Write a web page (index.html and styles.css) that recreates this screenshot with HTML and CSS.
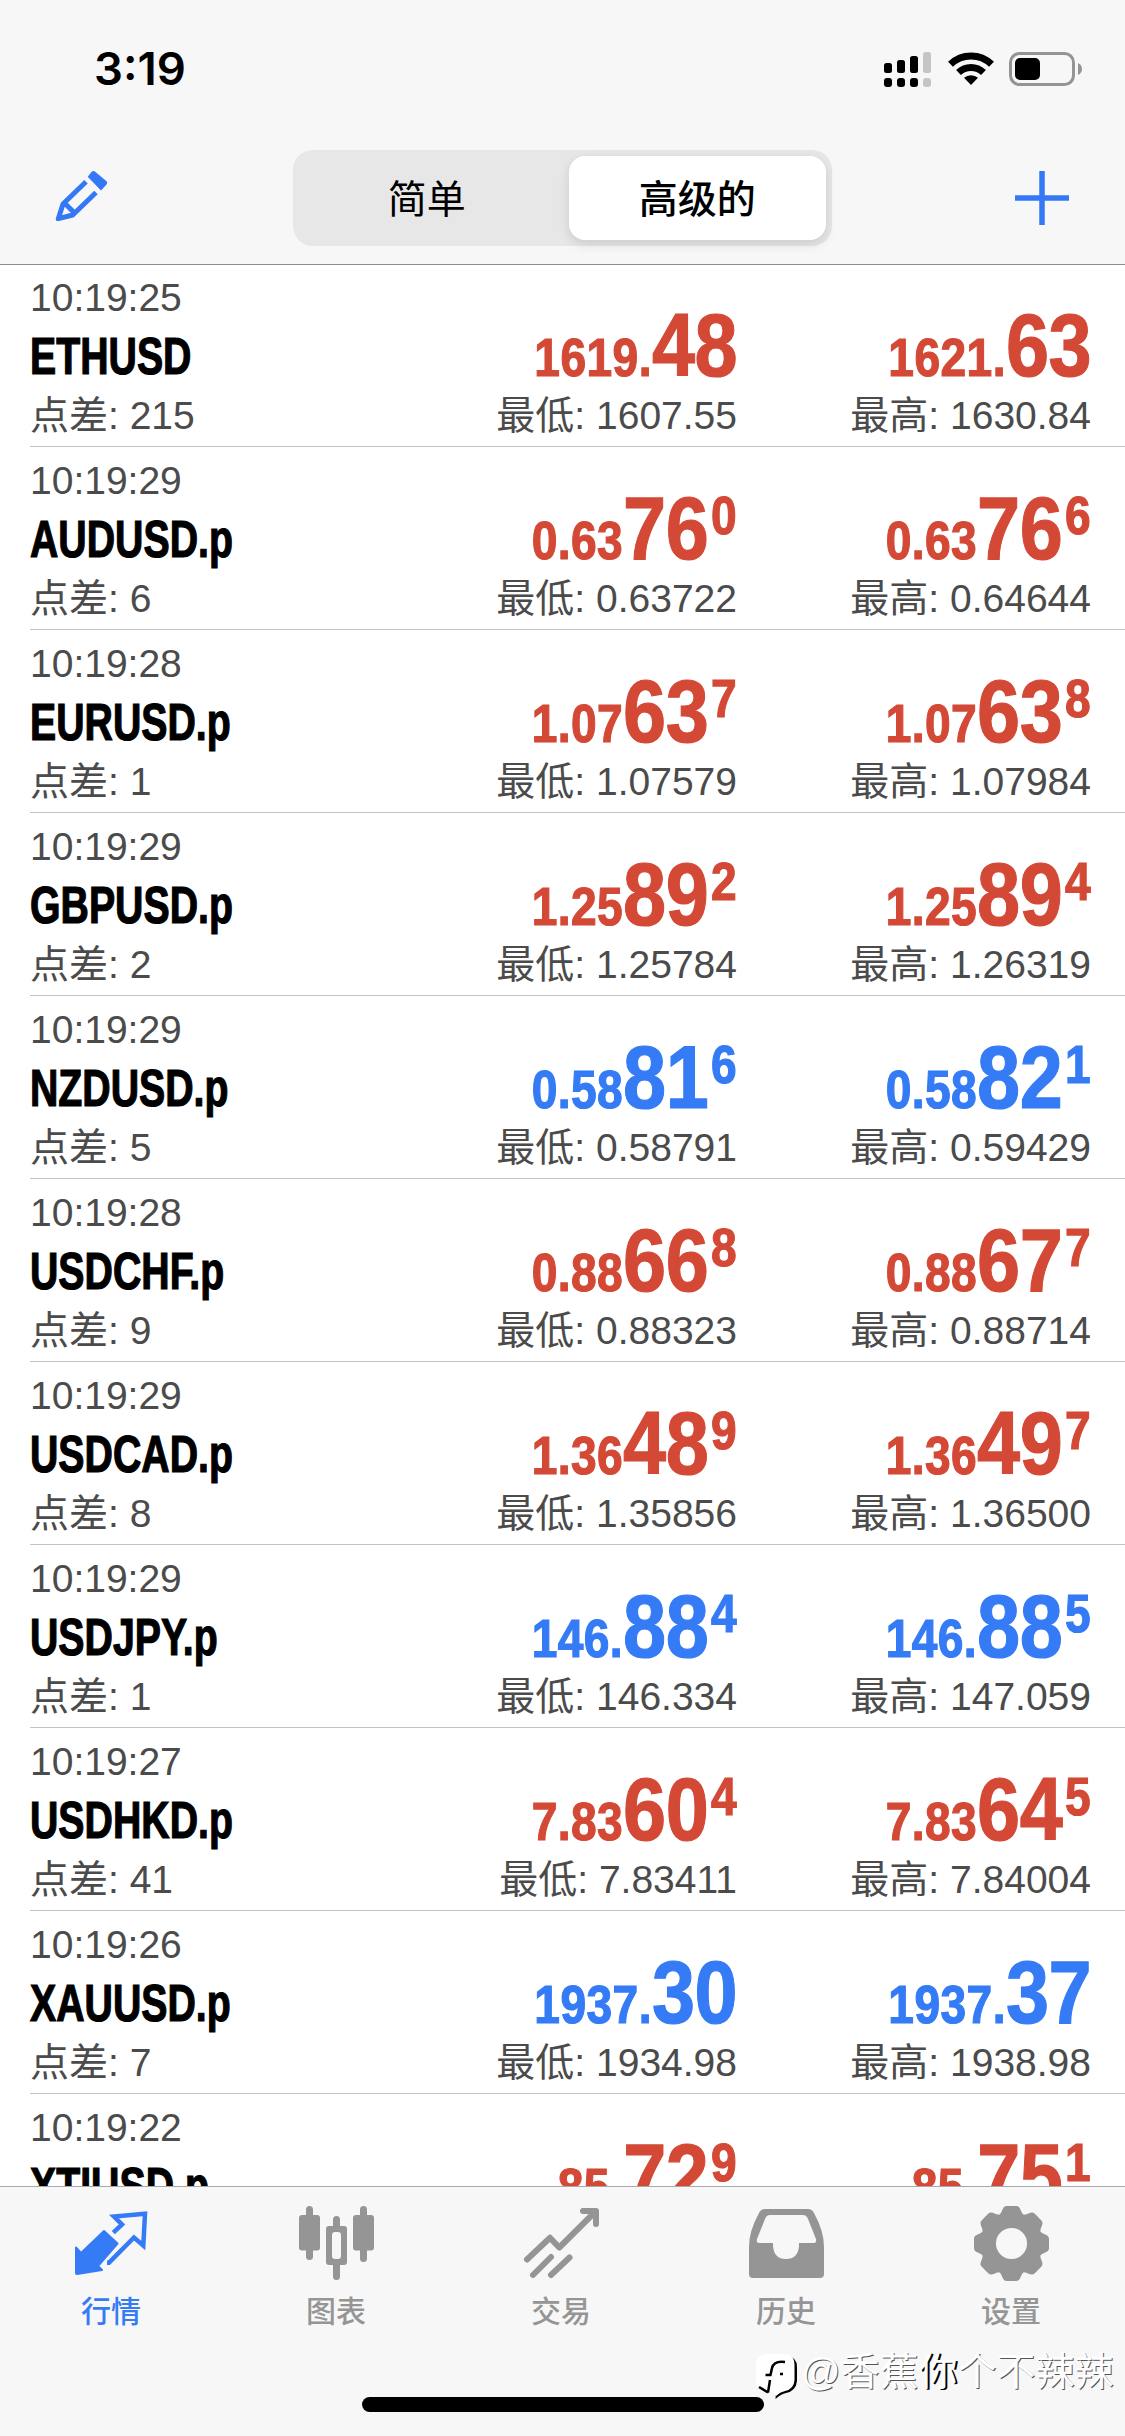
FILE: index.html
```html
<!DOCTYPE html>
<html lang="zh-CN">
<head>
<meta charset="utf-8">
<title>行情</title>
<link rel="stylesheet" href="styles.css">
</head>
<body>
<div class="app">
  <header class="header">
    <div class="status">
      <span class="clock">3:19</span>
      <div class="status-icons">
        <svg width="48" height="36" viewBox="0 0 48 36"><g><rect x="0" y="11" width="8" height="10" rx="2.5"/><rect x="13" y="8" width="8" height="13" rx="2.5"/><rect x="26" y="4" width="8" height="17" rx="2.5"/><rect x="0" y="26" width="8" height="9" rx="3"/><rect x="13" y="26" width="8" height="9" rx="3"/><rect x="26" y="26" width="8" height="9" rx="3"/></g><g fill="#c5c5c5"><rect x="39" y="0" width="8" height="21" rx="2.5"/><rect x="39" y="26" width="8" height="9" rx="3"/></g></svg>
        <svg width="46" height="34" viewBox="0 0 46 34"><g fill="none" stroke="#000" stroke-width="7"><path d="M2.5 12.2A29.5 29.5 0 0 1 43.5 12.2"/><path d="M10.5 20.6A18 18 0 0 1 35.5 20.6"/></g><path d="M16 25.8A10.5 10.5 0 0 1 30 25.8L23 33Z"/></svg>
        <svg width="74" height="34" viewBox="0 0 74 34"><rect x="1.5" y="1.5" width="63" height="31" rx="9" fill="none" stroke="#949494" stroke-width="3"/><rect x="6" y="6" width="25" height="22" rx="5"/><path d="M69 11Q73 13 73 17T69 23Z" fill="#949494"/></svg>
      </div>
    </div>
    <nav class="toolbar">
      <svg class="edit" width="54" height="54" viewBox="0 0 54 54"><path fill="#3478f6" d="M32.7 5.7L36.5 1Q38.3-1 40.5 1L51 9.7Q53 11.5 51.5 13.5L46 19.5Z"/><path fill="none" stroke="#3478f6" stroke-width="5" stroke-linejoin="round" d="M31 10.7L8 33L3.3 47.7L17.7 44L41 21.5M9 31.5L20 42.5"/></svg>
      <div class="segments"><span class="segment">简单</span><span class="segment active">高级的</span></div>
      <svg class="add" width="54" height="54" viewBox="0 0 54 54"><path stroke="#3478f6" stroke-width="5.5" d="M27 0V54M0 27H54"/></svg>
    </nav>
  </header>
  <main class="quotes" id="quotes"></main>
  <footer class="tabs">
    <div class="tab active"><svg width="80" height="84" viewBox="0 0 80 84"><path fill="currentColor" stroke="currentColor" stroke-width="2" stroke-linejoin="round" d="M5 47.5L10 53L33 31L46.500 43.500L27 66L31 70L6 74Q5 74 5 73Z"/><path fill="none" stroke="currentColor" stroke-width="4.5" d="M42.3 32.7L51 24.5L43 16.5L74 13.8L72.3 45.5L63 37.5L38 62.7H36"/></svg><span>行情</span></div>
    <div class="tab"><svg width="80" height="84" viewBox="0 0 80 84" fill="currentColor"><rect x="3" y="15" width="21" height="35.5" rx="3"/><rect x="10" y="6" width="7" height="54" rx="3.5"/><rect x="57" y="15" width="21" height="35.5" rx="3"/><rect x="64" y="6" width="7" height="56" rx="3.5"/><rect x="30" y="26" width="21" height="39" rx="3"/><rect x="37" y="16" width="7" height="64" rx="3.5"/><rect x="36" y="32" width="9" height="27" rx="3" fill="#f7f7f7"/></svg><span>图表</span></div>
    <div class="tab"><svg width="80" height="84" viewBox="0 0 80 84"><g fill="none" stroke="currentColor" stroke-width="6" stroke-linecap="round" stroke-linejoin="round"><path d="M6 59.5L29 37.8L38.3 47.5L74 12M62 11H75V24M12 75L30 57M30 75L48.5 57.5"/></g></svg><span>交易</span></div>
    <div class="tab"><svg width="80" height="84" viewBox="0 0 80 84"><path fill="currentColor" fill-rule="evenodd" d="M19 9H62Q66 9 68 13Q78 31 78 47V74Q78 78 74 78H7Q3 78 3 74V47Q3 31 13 13Q15 9 19 9ZM24 15Q20.5 15 19 19L11 39Q10 43 13 43H27V46Q28 59 40 59T53 46V43H67Q71 43 70 39L62 19Q60.5 15 57 15Z"/></svg><span>历史</span></div>
    <div class="tab"><svg width="80" height="84" viewBox="0 0 80 84"><g transform="translate(40.5 43.5)"><circle r="23.3" fill="none" stroke="currentColor" stroke-width="15.5"/><g fill="currentColor"><path id="tooth" d="M-14-27C-8-31-10-37.5-4.5-37.5H4.5C10-37.5 8-31 14-27Z"/><use href="#tooth" transform="rotate(45)"/><use href="#tooth" transform="rotate(90)"/><use href="#tooth" transform="rotate(135)"/><use href="#tooth" transform="rotate(180)"/><use href="#tooth" transform="rotate(225)"/><use href="#tooth" transform="rotate(270)"/><use href="#tooth" transform="rotate(315)"/></g></g></svg><span>设置</span></div>
  </footer>
  <div class="home-bar"></div>
  <div class="watermark">
    <svg width="45" height="48" viewBox="0 0 45 48"><path d="M30 1Q41 3 41 13V27Q40 37 30 39Q25 40 19.5 45L20 38Z"/><path fill="#fff" d="M11 0H28Q38.500 0 38.500 11V26Q38 35 29 37Q24 38 20 42L17 38H11Q0 38 0 27V11Q0 0 11 0Z"/><path fill="none" stroke="#000" stroke-width="2.5" d="M29 8Q18 6.500 16 14L14.500 21H9.500M14 26L12 38.500M3 33L12 38.500M24 20H27"/></svg>
    <span>@香蕉<b>你</b>个不辣辣</span>
  </div>
</div>
<script src="quotes.js"></script>
</body>
</html>
```
FILE: styles.css
```css
* { box-sizing: border-box; }
body { margin: 0; font-family: "Liberation Sans", "Noto Sans CJK SC", sans-serif; background: #fff; }
.app { position: relative; display: flex; flex-direction: column; width: 1125px; height: 2436px; overflow: hidden; }
.header { flex: none; height: 265px; background: #f7f7f7; border-bottom: 1px solid #8d8d8d; }
.status { display: flex; justify-content: space-between; height: 132px; padding: 0 42px 0 94px; }
.clock { font: 600 45.5px/50px Inter, sans-serif; padding-top: 44px; }
.status-icons { display: flex; gap: 15.5px; padding-top: 52px; }
.toolbar { display: flex; align-items: center; justify-content: space-between; height: 131px; padding: 0 56px 0 55px; }
.segments { display: flex; gap: 14px; width: 539px; height: 96px; padding: 6px; border-radius: 20px; background: #e7e7e8; }
.segment { flex: 1; font-size: 39px; line-height: 87px; text-align: center; }
.segment.active { background: #fff; border-radius: 16px; font-weight: 500; box-shadow: 0 4px 12px rgba(0,0,0,.12); }
.quotes { flex: 1; overflow: hidden; color: #4b4b4b; font-size: 39px; }
.quote { display: grid; grid-template-columns: 353px 354px 354px; height: 183px; margin-left: 30px; border-bottom: 1px solid #c4c4c4; }
.quote:first-child { height: 182px; }
.cell { display: flex; flex-direction: column; height: 182px; white-space: nowrap; }
.quote + .quote .cell { padding-top: 1px; }
.time { height: 56px; line-height: 66px; }
.symbol { height: 72px; line-height: 72px; font-size: 51px; font-weight: 700; color: #000; -webkit-text-stroke: 1.2px; transform: scaleX(.77); transform-origin: left; }
.cell.right { align-items: flex-end; }
.price { display: flex; align-items: baseline; height: 128px; font-size: 53px; font-weight: 700; line-height: 161px; -webkit-text-stroke: 1.2px; transform: scaleX(.87); transform-origin: right; }
.price span { letter-spacing: .5px; }
.price b { font-size: 89px; letter-spacing: -.5px; }
.price sup { align-self: flex-start; line-height: 136px; font-size: 53px; margin-left: 3px; }
.up { color: #347bf5; }
.down { color: #d34936; }
.note { line-height: 46px; }
.tabs { display: flex; flex: none; height: 250px; background: #f7f7f7; border-top: 1px solid #a9a9a9; color: #959595; }
.tab { flex: 1; display: flex; flex-direction: column; align-items: center; padding: 13px 3px 0 0; font-size: 30px; font-weight: 500; line-height: 44px; }
.tab svg { flex: none; margin-bottom: 6px; }
.tab.active { color: #347bf5; }
.home-bar { position: absolute; left: 362px; bottom: 24px; width: 402px; height: 15px; border-radius: 8px; background: #000; }
.watermark { position: absolute; left: 756px; top: 2354px; display: flex; color: #fff; font-size: 39px; line-height: 36px; text-shadow: 1px 1px #555; white-space: nowrap; }
.watermark b { font-weight: 400; text-shadow: 2px 1px #000; }
```
FILE: quotes.js
```js
const quotes = [
  ["10:19:25", "ETHUSD", 215, "down", "1619.|48|", "1621.|63|", "1607.55", "1630.84"],
  ["10:19:29", "AUDUSD.p", 6, "down", "0.63|76|0", "0.63|76|6", "0.63722", "0.64644"],
  ["10:19:28", "EURUSD.p", 1, "down", "1.07|63|7", "1.07|63|8", "1.07579", "1.07984"],
  ["10:19:29", "GBPUSD.p", 2, "down", "1.25|89|2", "1.25|89|4", "1.25784", "1.26319"],
  ["10:19:29", "NZDUSD.p", 5, "up", "0.58|81|6", "0.58|82|1", "0.58791", "0.59429"],
  ["10:19:28", "USDCHF.p", 9, "down", "0.88|66|8", "0.88|67|7", "0.88323", "0.88714"],
  ["10:19:29", "USDCAD.p", 8, "down", "1.36|48|9", "1.36|49|7", "1.35856", "1.36500"],
  ["10:19:29", "USDJPY.p", 1, "up", "146.|88|4", "146.|88|5", "146.334", "147.059"],
  ["10:19:27", "USDHKD.p", 41, "down", "7.83|60|4", "7.83|64|5", "7.83411", "7.84004"],
  ["10:19:26", "XAUUSD.p", 7, "up", "1937.|30|", "1937.|37|", "1934.98", "1938.98"],
  ["10:19:22", "XTIUSD.p", null, "down", "85.|72|9", "85.|75|1", null, null]
];
const price = (text, dir) => {
  const [lead, big, tip] = text.split("|");
  return `<div class="price ${dir}"><span>${lead}</span><b>${big}</b>${tip ? `<sup>${tip}</sup>` : ""}</div>`;
};
const note = (label, value) => value === null ? "" : `<div class="note">${label}: ${value}</div>`;
document.getElementById("quotes").innerHTML = quotes.map(([time, symbol, spread, dir, bid, ask, low, high]) => `
  <section class="quote">
    <div class="cell"><div class="time">${time}</div><div class="symbol">${symbol}</div>${note("点差", spread)}</div>
    <div class="cell right">${price(bid, dir)}${note("最低", low)}</div>
    <div class="cell right">${price(ask, dir)}${note("最高", high)}</div>
  </section>`).join("");
```
